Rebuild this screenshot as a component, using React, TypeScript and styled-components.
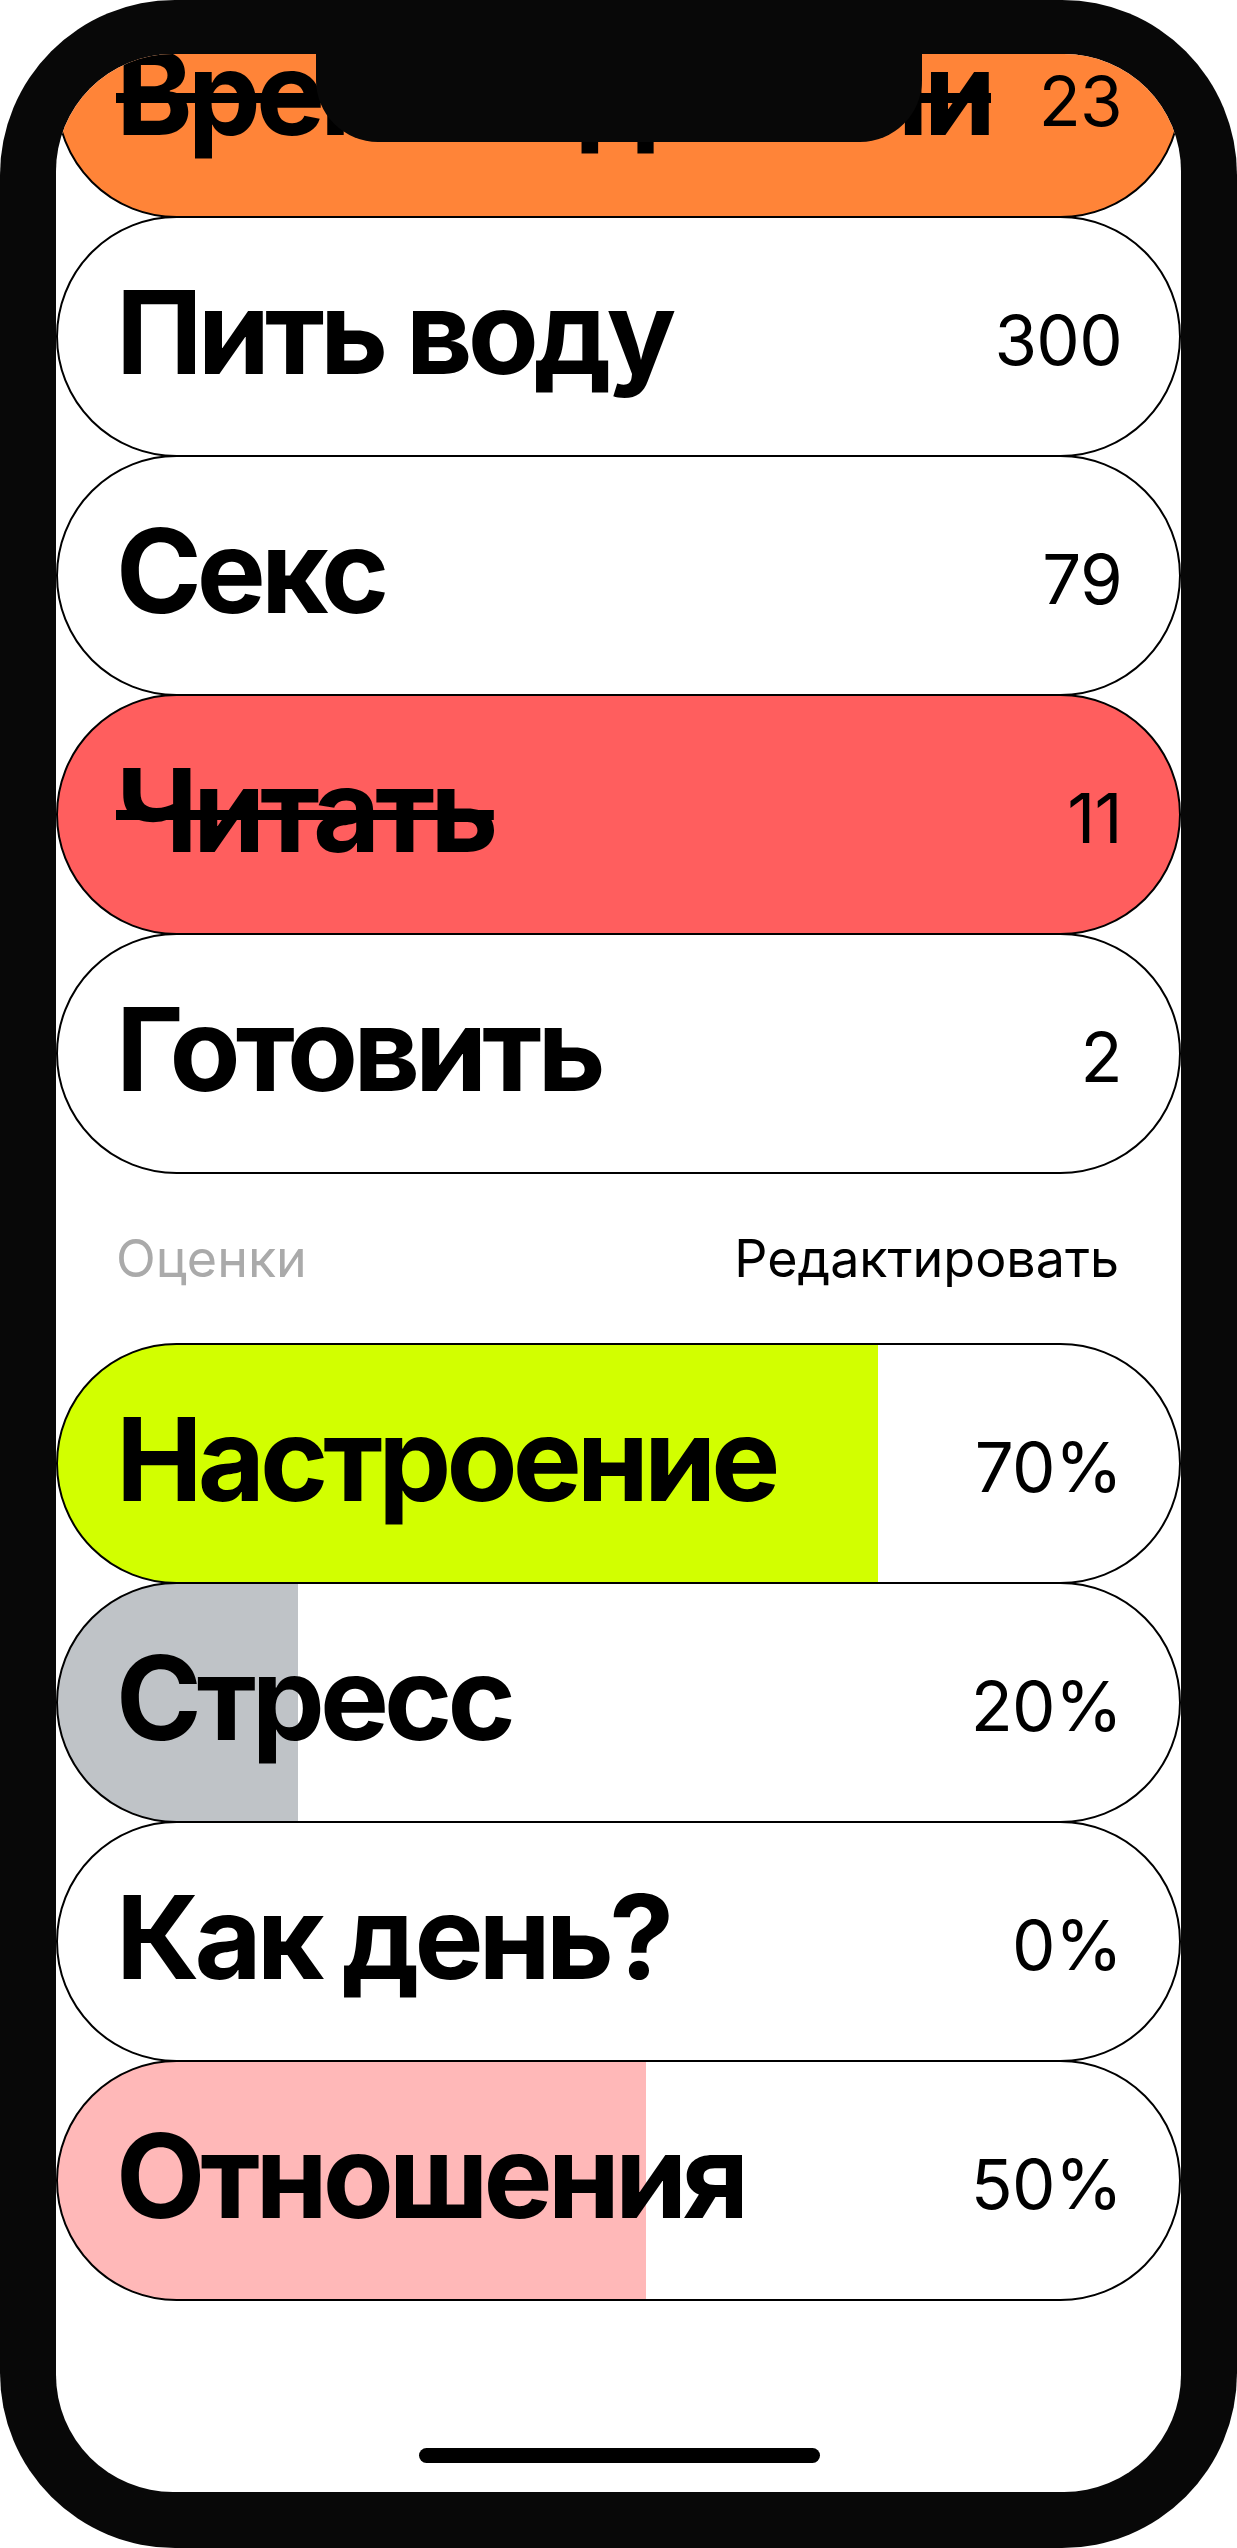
import React from "react";
import styled, { createGlobalStyle } from "styled-components";

const GlobalStyle = createGlobalStyle`
  html, body {
    margin: 0;
    padding: 0;
    background: #ffffff;
  }
  body {
    font-family: Inter, "Liberation Sans", Arial, sans-serif;
    -webkit-font-smoothing: antialiased;
  }
`;

// Corps du téléphone
const Phone = styled.div`
  position: relative;
  box-sizing: border-box;
  width: 1237px;
  height: 2548px;
  padding: 54px 56px 56px;
  background: #080808;
  border-radius: 175px;
`;

const Notch = styled.div`
  position: absolute;
  top: 0;
  left: 316px;
  width: 606px;
  height: 142px;
  background: #080808;
  border-radius: 0 0 62px 62px;
  z-index: 2;
`;

const Screen = styled.div`
  position: relative;
  height: 100%;
  background: #ffffff;
  border-radius: 117px;
  overflow: hidden;
`;

// La liste est défilée : le premier élément passe sous l'encoche
const List = styled.div<{ $offset?: number }>`
  margin-top: ${({ $offset }) => $offset ?? 0}px;
  display: flex;
  flex-direction: column;
`;

const Pill = styled.div<{ $bg: string; $fill?: string; $fillWidth?: number }>`
  box-sizing: border-box;
  height: 241px;
  display: flex;
  align-items: center;
  justify-content: space-between;
  padding: 0 57px 0 58px;
  border: 2px solid #000000;
  border-radius: 9999px;
  background: ${({ $bg, $fill, $fillWidth }) =>
    $fill && $fillWidth !== undefined
      ? `linear-gradient(to right, ${$fill} 0 ${$fillWidth}px, ${$bg} ${$fillWidth}px)`
      : $bg};
  & + & {
    margin-top: -2px;
  }
`;

const Title = styled.span<{ $done?: boolean }>`
  font-size: 116px;
  font-weight: 700;
  line-height: 1;
  letter-spacing: -0.043em;
  color: #000000;
  padding-bottom: 10px;
  white-space: nowrap;
  text-decoration: ${({ $done }) => ($done ? "line-through" : "none")};
  text-decoration-thickness: 10px;
`;

const Value = styled.span`
  font-size: 69px;
  font-weight: 400;
  line-height: 1;
  letter-spacing: -0.01em;
  color: #000000;
  padding-top: 7px;
`;

const SectionHeader = styled.div`
  display: flex;
  justify-content: space-between;
  align-items: center;
  padding: 59px 62px 58px 60px;
  font-size: 52px;
  line-height: 1;
`;

const SectionLabel = styled.span`
  color: #aaaaaa;
`;

const EditLink = styled.span`
  color: #000000;
`;

const HomeIndicator = styled.div`
  position: absolute;
  left: 50%;
  bottom: 29px;
  width: 401px;
  height: 15px;
  margin-left: -200px;
  background: #000000;
  border-radius: 8px;
`;

type Habit = { name: string; count: number; color: string; done?: boolean };
type Rating = { name: string; pct: number; color: string };

const habits: Habit[] = [
  { name: "Время с детьми", count: 23, color: "#ff8438", done: true },
  { name: "Пить воду", count: 300, color: "#ffffff" },
  { name: "Секс", count: 79, color: "#ffffff" },
  { name: "Читать", count: 11, color: "#ff5e5e", done: true },
  { name: "Готовить", count: 2, color: "#ffffff" },
];

const ratings: Rating[] = [
  { name: "Настроение", pct: 70, color: "#d2ff00" },
  { name: "Стресс", pct: 20, color: "#bfc3c7" },
  { name: "Как день?", pct: 0, color: "#ffffff" },
  { name: "Отношения", pct: 50, color: "#ffb8b8" },
];

// Largeur du remplissage à partir du pourcentage
const fillWidth = (pct: number) => (pct === 0 ? 0 : Math.round(8 + pct * 11.6));

const App: React.FC = () => (
  <>
    <GlobalStyle />
    <Phone>
      <Notch />
      <Screen>
        <List $offset={-77}>
          {habits.map((h) => (
            <Pill key={h.name} $bg={h.color}>
              <Title $done={h.done}>{h.name}</Title>
              <Value>{h.count}</Value>
            </Pill>
          ))}
        </List>
        <SectionHeader>
          <SectionLabel>Оценки</SectionLabel>
          <EditLink>Редактировать</EditLink>
        </SectionHeader>
        <List>
          {ratings.map((r) => (
            <Pill key={r.name} $bg="#ffffff" $fill={r.color} $fillWidth={fillWidth(r.pct)}>
              <Title>{r.name}</Title>
              <Value>{r.pct}%</Value>
            </Pill>
          ))}
        </List>
        <HomeIndicator />
      </Screen>
    </Phone>
  </>
);

export default App;
